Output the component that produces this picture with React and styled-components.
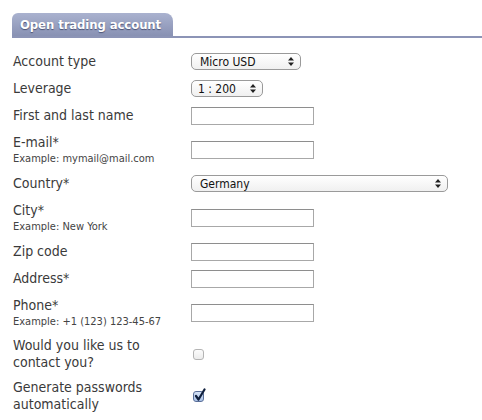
import React from "react";
import styled, { createGlobalStyle } from "styled-components";

const GlobalStyle = createGlobalStyle`
  body {
    margin: 0;
    background: #fff;
    font-family: "DejaVu Sans Condensed", "DejaVu Sans", Verdana, sans-serif;
    color: #333;
  }
`;

const Page = styled.div`
  padding: 13px 0 0 12px;
`;

const TabBar = styled.div`
  display: flex;
  border-bottom: 2px solid #8c94b6;
`;

const Tab = styled.div`
  height: 23px;
  padding: 0 12px 0 8px;
  display: flex;
  align-items: center;
  border-radius: 6px 8px 0 0;
  background: linear-gradient(#aab2cf, #8891b3);
  color: #fff;
  font-weight: bold;
  font-size: 13px;
  letter-spacing: -0.1px;
  text-shadow: 0 1px 1px #4a5275;
`;

const Form = styled.div`
  display: grid;
  grid-template-columns: 178px 1fr;
  row-gap: 8px;
  align-items: center;
  padding: 14px 0 0 1px;
`;

const Label = styled.div`
  font-size: 14px;
  line-height: ${(p) => p.$lh}px;
  color: #3a3a3a;
`;

const Hint = styled.div`
  font-size: 11px;
  line-height: 15px;
  color: #444;
`;

const Control = styled.div`
  display: flex;
  align-items: center;
  min-height: 19px;
`;

const SelectBox = styled.div`
  width: ${(p) => p.$width}px;
  height: 17px;
  box-sizing: border-box;
  display: flex;
  align-items: center;
  justify-content: space-between;
  padding: 0 6px 0 ${(p) => (p.$pad ? p.$pad : 8)}px;
  border: 1px solid #9a9a9a;
  border-radius: 5px;
  background: linear-gradient(#ffffff, #f0f0f0);
  font-size: 12px;
  color: #111;
`;

const Input = styled.input`
  width: 123px;
  height: 18px;
  box-sizing: border-box;
  border: 1px solid #a8a8a8;
  border-top-color: #8e8e8e;
  margin: 0;
  padding: 0 3px;
  background: #fff;
`;

const Check = styled.span`
  width: 11px;
  height: 11px;
  margin-left: 2px;
  box-sizing: border-box;
  border: 1px solid ${(p) => (p.$on ? "#5a6f9a" : "#b4b4b4")};
  border-radius: 3px;
  background: ${(p) =>
    p.$on ? "linear-gradient(#d6e3f7, #a9c1e6)" : "linear-gradient(#fcfcfc, #ececec)"};
  position: relative;
  display: inline-block;
`;

const CheckMark = styled.svg`
  position: absolute;
  left: 0;
  top: -4px;
`;

const Arrows = () => (
  <svg width="6" height="9" viewBox="0 0 6 9">
    <path d="M3 0 L6 3.5 L0 3.5 Z M3 9 L6 5.5 L0 5.5 Z" fill="#222" />
  </svg>
);

const Select = ({ width, value, pad }) => (
  <SelectBox $width={width} $pad={pad}>
    <span>{value}</span>
    <Arrows />
  </SelectBox>
);

const Checkbox = ({ on }) => (
  <Check $on={on}>
    {on && (
      <CheckMark width="12" height="14" viewBox="0 0 12 14">
        <path d="M2 8 L4.5 11.5 L10.5 1.5" stroke="#0f1f3d" strokeWidth="2.2" fill="none" strokeLinecap="round" strokeLinejoin="round" />
      </CheckMark>
    )}
  </Check>
);

// single line labels 19px, labels with a hint 18px, wrapped labels 17px
const Field = ({ label, hint, wrap, children }) => (
  <>
    <div>
      <Label $lh={hint ? 18 : wrap ? 17 : 19}>{label}</Label>
      {hint && <Hint>{hint}</Hint>}
    </div>
    <Control>{children}</Control>
  </>
);

export default function App() {
  return (
    <Page>
      <GlobalStyle />
      <TabBar>
        <Tab>Open trading account</Tab>
      </TabBar>
      <Form>
        <Field label="Account type">
          <Select width={110} value="Micro USD" />
        </Field>
        <Field label="Leverage">
          <Select width={72} value="1 : 200" pad={6} />
        </Field>
        <Field label="First and last name">
          <Input />
        </Field>
        <Field label="E-mail*" hint="Example: mymail@mail.com">
          <Input />
        </Field>
        <Field label="Country*">
          <Select width={257} value="Germany" />
        </Field>
        <Field label="City*" hint="Example: New York">
          <Input />
        </Field>
        <Field label="Zip code">
          <Input />
        </Field>
        <Field label="Address*">
          <Input />
        </Field>
        <Field label="Phone*" hint="Example: +1 (123) 123-45-67">
          <Input />
        </Field>
        <Field label={<>Would you like us to<br />contact you?</>} wrap>
          <Checkbox />
        </Field>
        <Field label={<>Generate passwords<br />automatically</>} wrap>
          <Checkbox on />
        </Field>
      </Form>
    </Page>
  );
}
